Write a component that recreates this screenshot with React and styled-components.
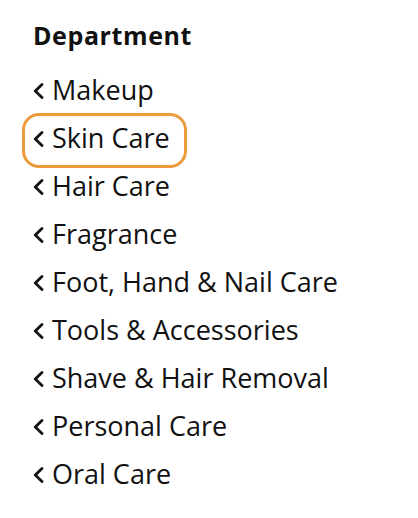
import React from "react";
import styled, { createGlobalStyle } from "styled-components";

const GlobalStyle = createGlobalStyle`
  body {
    margin: 0;
    background: #ffffff;
    font-family: "Open Sans", "Noto Sans", sans-serif;
    color: #111111;
  }
`;

const Panel = styled.div`
  width: 418px;
  height: 518px;
  box-sizing: border-box;
  padding: 19px 0 0 33px;
  background: #ffffff;
`;

const Heading = styled.h2`
  margin: 0 0 14px;
  font-size: 25px;
  font-weight: 700;
  letter-spacing: 0.6px;
  line-height: 32px;
  color: #111111;
`;

const List = styled.ul`
  list-style: none;
  margin: 0;
  padding: 0;
`;

const Item = styled.li`
  position: relative;
  display: flex;
  align-items: center;
  gap: 8px;
  height: 48px;
  width: fit-content;
  font-size: 27px;
  color: #111111;

  &::after {
    content: "";
    display: ${(props) => (props.$active ? "block" : "none")};
    position: absolute;
    left: -11px;
    right: -17px;
    top: 0;
    bottom: -7px;
    border: 3px solid #ec9a3c;
    border-radius: 17px;
  }
`;

const ChevronIcon = styled.svg`
  flex: none;
  margin-top: 3px;
`;

const Chevron = () => (
  <ChevronIcon width="11" height="16" viewBox="0 0 11 16" fill="none">
    <path d="M9 1.5 L2.3 8 L9 14.5" stroke="#111" strokeWidth="2.8" strokeLinecap="round" strokeLinejoin="round" />
  </ChevronIcon>
);

const departments = [
  "Makeup",
  "Skin Care",
  "Hair Care",
  "Fragrance",
  "Foot, Hand & Nail Care",
  "Tools & Accessories",
  "Shave & Hair Removal",
  "Personal Care",
  "Oral Care",
];

export default function App() {
  return (
    <>
      <GlobalStyle />
      <Panel>
        <Heading>Department</Heading>
        <List>
          {departments.map((name) => (
            <Item key={name} $active={name === "Skin Care"}>
              <Chevron />
              <span>{name}</span>
            </Item>
          ))}
        </List>
      </Panel>
    </>
  );
}
